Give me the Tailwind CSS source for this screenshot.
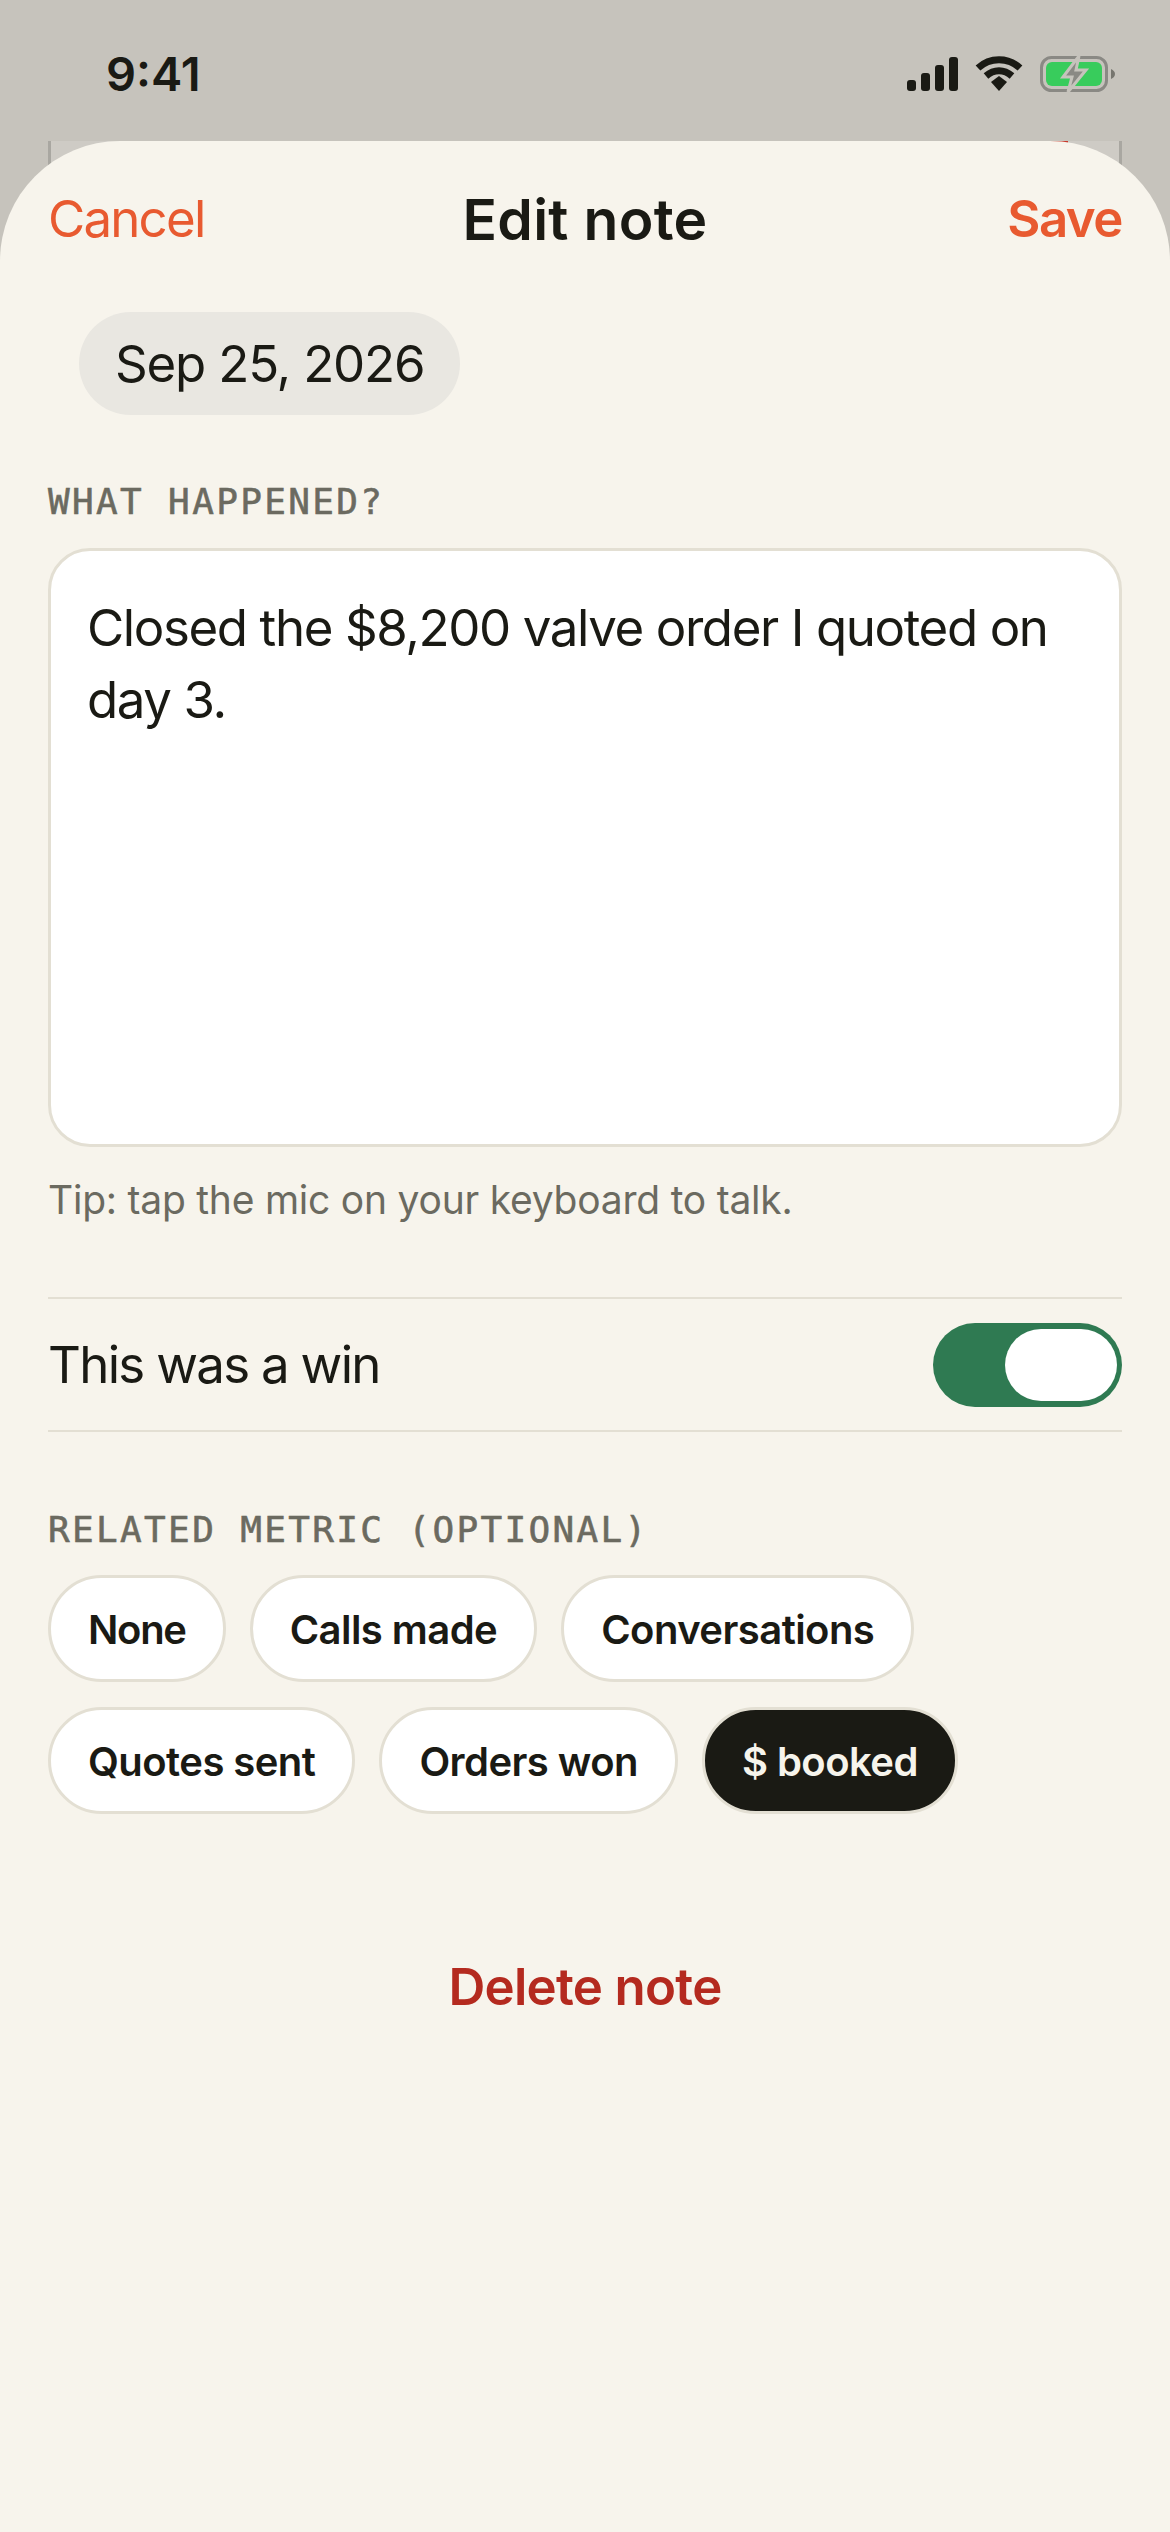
<!DOCTYPE html>
<html lang="en">
<head>
    <meta charset="UTF-8" />
    <meta name="viewport" content="width=device-width, initial-scale=1.0" />
    <title>Edit note</title>
    <script src="https://cdn.jsdelivr.net/npm/@tailwindcss/browser@4"></script>
</head>
<body class="bg-[#c6c3bc] font-['Inter',sans-serif] text-[#1a1a14]">
    <div class="relative w-[1170px] h-[2532px] overflow-hidden flex flex-col">
        <!-- Status bar -->
        <div class="h-[141px] shrink-0 flex items-start justify-between pt-[47px] pl-[106px] pr-[55px]">
            <span class="text-[47px] leading-[54px] font-semibold">9:41</span>
            <div class="flex items-start gap-[17px] pt-[8px]">
                <svg width="51" height="36" viewBox="0 0 51 36" class="mt-[2px]" fill="#1a1a14">
                    <rect x="0" y="23" width="9" height="11" rx="3" />
                    <rect x="14" y="16" width="9" height="18" rx="3" />
                    <rect x="28" y="8" width="9" height="26" rx="3" />
                    <rect x="42" y="0" width="9" height="34" rx="3" />
                </svg>
                <svg width="48" height="36" viewBox="0 0 48 36" fill="none" stroke="#1a1a14" stroke-width="7">
                    <path d="M3 13 C15 2 33 2 45 13" />
                    <path d="M11 21 C19 14 29 14 37 21" />
                    <path d="M16 27 L24 21 L32 27 L24 36 Z" fill="#1a1a14" stroke="none" />
                </svg>
                <svg width="75" height="38" viewBox="0 0 75 38" fill="none">
                    <rect x="1.500" y="2.500" width="65" height="33" rx="10" stroke="#8a8984" stroke-width="3" />
                    <rect x="6" y="7" width="56" height="24" rx="6" fill="#38cc5c" />
                    <path d="M71 14 C73.500 15 75 17 75 19 C75 21 73.500 23 71 24 Z" fill="#77766f" />
                    <path d="M39 1 L23 22 L32 22 L28 37 L46 15 L36 15 Z" fill="#8a8984" stroke="#c6c3bc" stroke-width="3" />
                </svg>
            </div>
        </div>

        <!-- Card behind the sheet -->
        <div class="absolute left-[48px] top-[141px] w-[1074px] h-[60px] border-x-[3px] border-[#a9a7a1] bg-[#cecbc5]">
            <div class="absolute left-[980px] top-0 w-[37px] h-[5px] bg-[#c8392b]"></div>
        </div>

        <!-- Sheet -->
        <div class="relative flex-1 bg-[#f7f4ec] rounded-t-[120px] px-[48px] flex flex-col">
            <div class="grid grid-cols-[1fr_auto_1fr] items-center h-[156px] text-[#e85a30] text-[51px] leading-[60px]">
                <span class="tracking-[-1.8px]">Cancel</span>
                <span class="text-[57px] font-semibold tracking-[0.3px] text-[#1a1a14] pt-[2px]">Edit note</span>
                <span class="font-semibold text-right tracking-[-1.5px]">Save</span>
            </div>

            <div class="ml-[31px] mt-[15px] self-start h-[103px] px-[36px] pt-[1px] flex items-center rounded-full bg-[#e9e7e1] text-[51px] tracking-[-1.2px]">Sep 25, 2026</div>

            <div class="mt-[65px] h-[44px] font-['DejaVu_Sans_Mono',monospace] [-webkit-text-stroke:0.6px_#6b6a60] text-[36px] leading-[44px] tracking-[2.35px] text-[#6b6a60]">WHAT HAPPENED?</div>

            <div class="mt-[24px] h-[599px] bg-white border-[3px] border-[#e3dfd3] rounded-[42px] px-[36px] py-[41px] text-[51px] leading-[72px] tracking-[-1.4px]">Closed the $8,200 valve order I quoted on day 3.</div>

            <p class="mt-[30px] text-[39px] leading-[46px] tracking-[-0.23px] text-[#6b6a60]">Tip: tap the mic on your keyboard to talk.</p>

            <div class="mt-[74px] h-[135px] border-y-[2px] border-[#e3dfd3] flex items-center justify-between text-[51px] tracking-[-1.7px]">
                <span class="pt-[2px]">This was a win</span>
                <div class="w-[189px] h-[84px] rounded-full bg-[#2f7a52] flex items-center justify-end pr-[5px]">
                    <div class="w-[112px] h-[72px] rounded-full bg-white"></div>
                </div>
            </div>

            <div class="mt-[76px] h-[44px] font-['DejaVu_Sans_Mono',monospace] [-webkit-text-stroke:0.6px_#6b6a60] text-[36px] leading-[44px] tracking-[2.35px] text-[#6b6a60]">RELATED METRIC (OPTIONAL)</div>

            <div class="mt-[23px] flex flex-wrap gap-x-[24px] gap-y-[25px] text-[40px] font-semibold tracking-[-0.55px]">
                <span class="h-[107px] px-[37px] pt-[2px] flex items-center rounded-full bg-white border-[3px] border-[#e3dfd3] tracking-[-1.3px]">None</span>
                <span class="h-[107px] px-[37px] pt-[2px] flex items-center rounded-full bg-white border-[3px] border-[#e3dfd3]">Calls made</span>
                <span class="h-[107px] px-[37px] pt-[2px] flex items-center rounded-full bg-white border-[3px] border-[#e3dfd3]">Conversations</span>
                <span class="h-[107px] px-[37px] pt-[2px] flex items-center rounded-full bg-white border-[3px] border-[#e3dfd3]">Quotes sent</span>
                <span class="h-[107px] px-[37px] pt-[2px] flex items-center rounded-full bg-white border-[3px] border-[#e3dfd3]">Orders won</span>
                <span class="h-[107px] px-[37px] pt-[2px] flex items-center rounded-full bg-[#1a1a14] text-[#f6f4ec] border-[3px] border-[#e3dfd3]">$ booked</span>
            </div>

            <div class="mt-[143px] text-center text-[51px] leading-[60px] font-semibold tracking-[-0.7px] text-[#b42a1f]">Delete note</div>
        </div>
    </div>
</body>
</html>
